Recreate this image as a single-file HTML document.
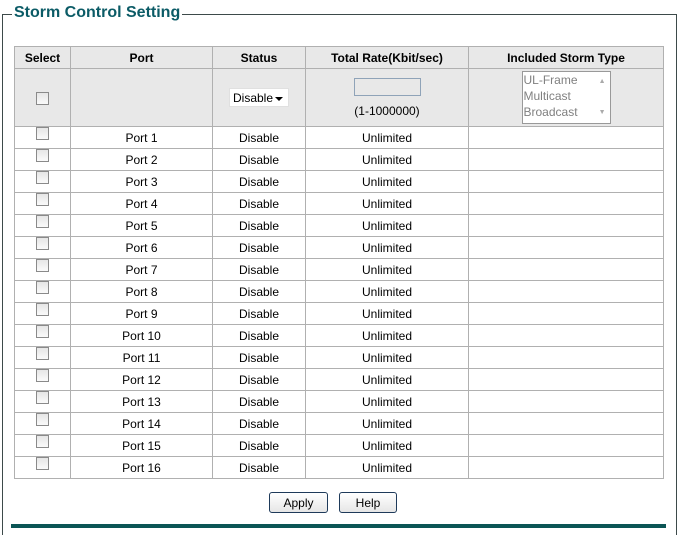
<!DOCTYPE html>
<html><head><style>
body{margin:0;width:677px;height:528px;background:#fff;font-family:"Liberation Sans",Arial,sans-serif;font-size:12px;color:#000;position:relative;overflow:hidden}
.fs{position:absolute;left:2px;top:14px;width:673px;height:520px;border:1px solid #3d4a4a;border-bottom:none}
.title{position:absolute;left:12px;top:4px;background:#fff;padding:0 2px;font-weight:bold;font-size:16px;color:#0b5b66}
table{position:absolute;left:14px;top:46px;border-collapse:collapse;table-layout:fixed}
td,th{border:1px solid #b0b0b0;text-align:center;padding:0;font-size:12px}
th{background:#e8e8e8;height:21px;font-weight:bold}
tr.r2 td{background:#e8e8e8;height:57px}
tr.d td{height:21px}
.cb{display:inline-block;width:11px;height:11px;border:1px solid #8a8a8a;background:linear-gradient(#e6e6e6,#fafafa);vertical-align:middle}
.d .cb{position:relative;top:-5px}
.sel{display:inline-block;width:60px;height:19px;border:1px solid #e0e0e0;background:#fff;line-height:19px;font-size:12px;text-align:left;padding-left:3px;box-sizing:border-box;position:relative;top:0px}
.sel:after{content:"";position:absolute;right:5px;top:8px;border:4px solid transparent;border-top:4px solid #000;border-bottom:0}
.inp{display:inline-block;width:65px;height:16px;border:1px solid #8fa3b8;background:#e8e8e8}
.lb{width:89px;height:53px;border:1px solid #999;background:#fff;margin:0 auto;text-align:left;color:#808080;font-size:12px;line-height:16px;position:relative;padding-left:1px;box-sizing:border-box}
.btn{position:absolute;top:492px;height:21px;border:1px solid #1e3a5a;border-radius:3px;background:linear-gradient(#fff,#e6e6e6);font-size:12px;text-align:center;line-height:20px;box-sizing:border-box}
</style></head><body>
<div class="fs"></div>
<div class="title">Storm Control Setting</div>
<table>
<colgroup><col style="width:56px"><col style="width:142px"><col style="width:93px"><col style="width:163px"><col style="width:195px"></colgroup>
<tr><th>Select</th><th>Port</th><th>Status</th><th>Total Rate(Kbit/sec)</th><th>Included Storm Type</th></tr>
<tr class="r2"><td><span class="cb"></span></td><td></td><td><span class="sel">Disable</span></td><td><span class="inp"></span><div style="margin-top:5px">(1-1000000)</div></td><td><div class="lb">UL-Frame<br>Multicast<br>Broadcast<span style="position:absolute;right:4px;top:2px;font-size:7px;color:#aaa">▲</span><span style="position:absolute;right:4px;bottom:2px;font-size:7px;color:#aaa">▼</span></div></td></tr>
<tr class="d"><td><span class="cb"></span></td><td>Port 1</td><td>Disable</td><td>Unlimited</td><td></td></tr>
<tr class="d"><td><span class="cb"></span></td><td>Port 2</td><td>Disable</td><td>Unlimited</td><td></td></tr>
<tr class="d"><td><span class="cb"></span></td><td>Port 3</td><td>Disable</td><td>Unlimited</td><td></td></tr>
<tr class="d"><td><span class="cb"></span></td><td>Port 4</td><td>Disable</td><td>Unlimited</td><td></td></tr>
<tr class="d"><td><span class="cb"></span></td><td>Port 5</td><td>Disable</td><td>Unlimited</td><td></td></tr>
<tr class="d"><td><span class="cb"></span></td><td>Port 6</td><td>Disable</td><td>Unlimited</td><td></td></tr>
<tr class="d"><td><span class="cb"></span></td><td>Port 7</td><td>Disable</td><td>Unlimited</td><td></td></tr>
<tr class="d"><td><span class="cb"></span></td><td>Port 8</td><td>Disable</td><td>Unlimited</td><td></td></tr>
<tr class="d"><td><span class="cb"></span></td><td>Port 9</td><td>Disable</td><td>Unlimited</td><td></td></tr>
<tr class="d"><td><span class="cb"></span></td><td>Port 10</td><td>Disable</td><td>Unlimited</td><td></td></tr>
<tr class="d"><td><span class="cb"></span></td><td>Port 11</td><td>Disable</td><td>Unlimited</td><td></td></tr>
<tr class="d"><td><span class="cb"></span></td><td>Port 12</td><td>Disable</td><td>Unlimited</td><td></td></tr>
<tr class="d"><td><span class="cb"></span></td><td>Port 13</td><td>Disable</td><td>Unlimited</td><td></td></tr>
<tr class="d"><td><span class="cb"></span></td><td>Port 14</td><td>Disable</td><td>Unlimited</td><td></td></tr>
<tr class="d"><td><span class="cb"></span></td><td>Port 15</td><td>Disable</td><td>Unlimited</td><td></td></tr>
<tr class="d"><td><span class="cb"></span></td><td>Port 16</td><td>Disable</td><td>Unlimited</td><td></td></tr>
</table>
<div class="btn" style="left:269px;width:59px">Apply</div>
<div class="btn" style="left:339px;width:58px">Help</div>
<div style="position:absolute;left:11px;top:524px;width:655px;height:4px;background:#0b5555"></div>
</body></html>
